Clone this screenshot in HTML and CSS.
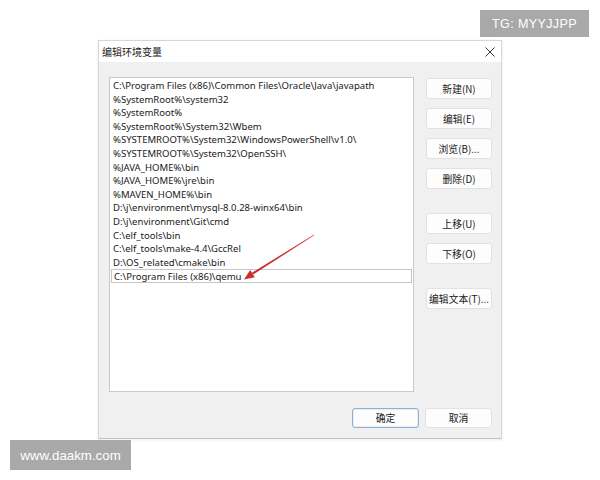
FILE: index.html
```html
<!DOCTYPE html>
<html lang="zh-CN">
<head>
<meta charset="utf-8">
<title>编辑环境变量</title>
<link rel="stylesheet" href="styles.css">
</head>
<body>
<div class="page">
  <div class="dialog">
    <div class="titlebar">
      <span class="title">编辑环境变量</span>
      <svg class="close" width="10" height="10" viewBox="0 0 10 10"><path d="M0.5 0.5 L9.5 9.5 M9.5 0.5 L0.5 9.5" stroke="#333" stroke-width="1" fill="none"/></svg>
    </div>
    <div class="body">
      <div class="main">
        <div class="list">
          <div class="row">C:\Program Files (x86)\Common Files\Oracle\Java\javapath</div>
          <div class="row">%SystemRoot%\system32</div>
          <div class="row">%SystemRoot%</div>
          <div class="row">%SystemRoot%\System32\Wbem</div>
          <div class="row">%SYSTEMROOT%\System32\WindowsPowerShell\v1.0\</div>
          <div class="row">%SYSTEMROOT%\System32\OpenSSH\</div>
          <div class="row">%JAVA_HOME%\bin</div>
          <div class="row">%JAVA_HOME%\jre\bin</div>
          <div class="row">%MAVEN_HOME%\bin</div>
          <div class="row">D:\j\environment\mysql-8.0.28-winx64\bin</div>
          <div class="row">D:\j\environment\Git\cmd</div>
          <div class="row">C:\elf_tools\bin</div>
          <div class="row">C:\elf_tools\make-4.4\GccRel</div>
          <div class="row">D:\OS_related\cmake\bin</div>
          <div class="row editing">C:\Program Files (x86)\qemu</div>
        </div>
        <div class="side">
          <div class="group">
            <button class="btn">新建(N)</button>
            <button class="btn">编辑(E)</button>
            <button class="btn">浏览(B)...</button>
            <button class="btn">删除(D)</button>
          </div>
          <div class="group">
            <button class="btn">上移(U)</button>
            <button class="btn">下移(O)</button>
          </div>
          <div class="group">
            <button class="btn">编辑文本(T)...</button>
          </div>
        </div>
      </div>
      <div class="footer">
        <button class="btn default">确定</button>
        <button class="btn">取消</button>
      </div>
    </div>
  </div>

  <svg class="arrow" width="600" height="480" viewBox="0 0 600 480">
    <polygon points="314.2,235.3 313.8,234.7 251.9,272.8 253.1,274.6" fill="#c8312d"/>
    <polygon points="244,279.5 250.2,270.1 254.8,277.3" fill="#c8312d"/>
  </svg>

  <div class="wm wm-top">TG: MYYJJPP</div>
  <div class="wm wm-bottom">www.daakm.com</div>
</div>
</body>
</html>
```

FILE: styles.css
```css
html, body {
  margin: 0;
  padding: 0;
  background: #ffffff;
}

.page {
  position: relative;
  width: 600px;
  height: 480px;
  padding: 40px 0 0 98px;
  box-sizing: border-box;
  font-family: "Noto Sans", "Noto Sans CJK SC", sans-serif;
  color: #1a1a1a;
}

.dialog {
  width: 404px;
  height: 399px;
  box-sizing: border-box;
  border: 1px solid #d6d6d6;
  border-bottom-color: #c4c4c4;
  background: #f0f0f0;
  display: flex;
  flex-direction: column;
  box-shadow: 0 1px 3px rgba(0, 0, 0, 0.08);
}

.titlebar {
  height: 21px;
  background: #ffffff;
  display: flex;
  align-items: center;
  justify-content: space-between;
  padding: 0 6px 0 3px;
}

.title {
  font-family: "Noto Sans CJK SC", sans-serif;
  font-size: 10px;
  color: #222;
}

.close {
  display: block;
}

.body {
  flex: 1;
  display: flex;
  flex-direction: column;
  padding: 15px 9px 0 10px;
}

.main {
  display: flex;
  gap: 12px;
}

.list {
  width: 306px;
  height: 315px;
  box-sizing: border-box;
  background: #ffffff;
  border: 1px solid #c9c9c9;
  padding: 1px 1px 0 1px;
}

.row {
  height: 13.6px;
  line-height: 13.6px;
  font-size: 9.55px;
  padding-left: 2px;
  white-space: nowrap;
  color: #1a1a1a;
}

.row.editing {
  border: 1px solid #c6c6c6;
  height: 14px;
  line-height: 13px;
  box-sizing: border-box;
}

.side {
  display: flex;
  flex-direction: column;
  gap: 24px;
  padding-top: 1px;
}

.group {
  display: flex;
  flex-direction: column;
  gap: 9px;
}

.btn {
  width: 66px;
  height: 21px;
  padding: 0;
  margin: 0;
  background: #fdfdfd;
  border: 1px solid #e2e2e2;
  border-radius: 3px;
  font-family: "Noto Sans CJK SC", sans-serif;
  font-size: 9.8px;
  color: #1a1a1a;
  box-sizing: border-box;
  display: flex;
  align-items: center;
  justify-content: center;
}

.footer {
  display: flex;
  justify-content: flex-end;
  gap: 6px;
  margin-top: 16px;
}

.footer .btn {
  width: 67px;
  height: 20px;
}

.btn.default {
  border: 1px solid #8fb0cf;
  box-shadow: inset 0 0 0 1px #e6eef6;
}

.arrow {
  position: absolute;
  left: 0;
  top: 0;
  pointer-events: none;
}

.wm {
  position: absolute;
  background: #a9a9a9;
  color: #ffffff;
  font-family: "Liberation Sans", sans-serif;
  display: flex;
  align-items: center;
  justify-content: center;
}

.wm-top {
  left: 480px;
  top: 10px;
  width: 109px;
  height: 27px;
  font-size: 12.5px;
  letter-spacing: 0.4px;
}

.wm-bottom {
  left: 10px;
  top: 440px;
  width: 121px;
  height: 30px;
  font-size: 13.3px;
}
```
